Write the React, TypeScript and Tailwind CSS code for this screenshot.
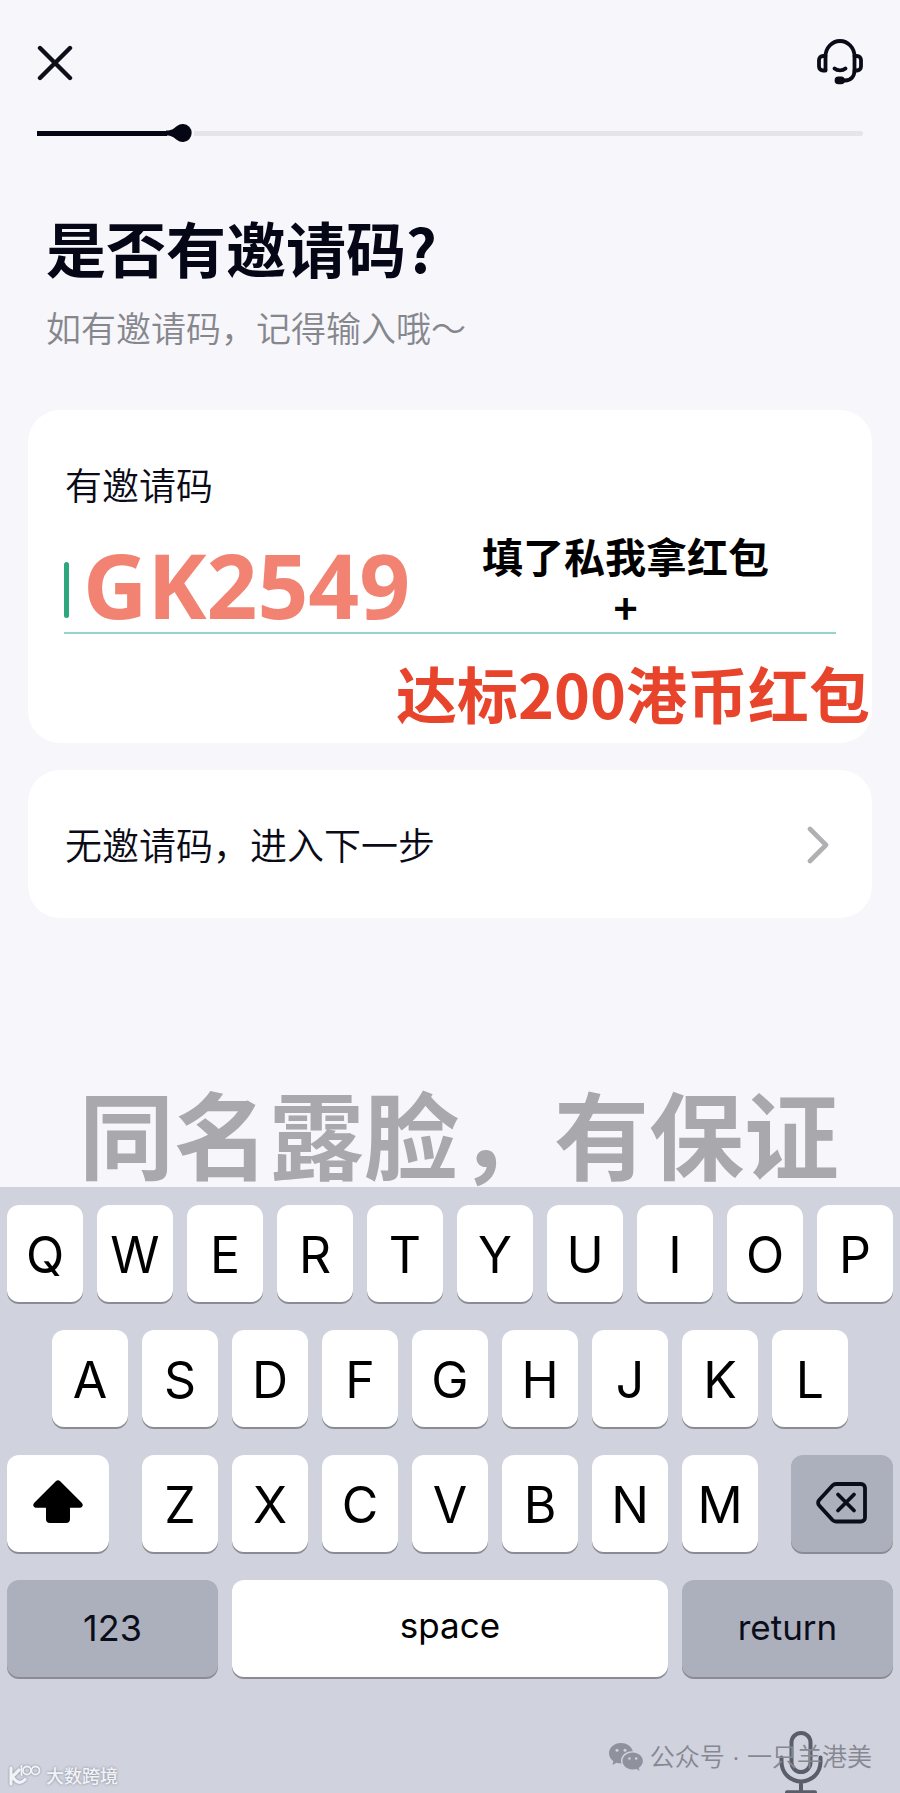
import type { ReactNode } from 'react';
import clsx from 'clsx';

interface KeyProps {
  label: string;
  tone?: 'light' | 'dark';
  className?: string;
  children?: ReactNode;
}

function Key({ label, tone = 'light', className = 'flex-[76] pt-1 text-[50px]', children }: KeyProps) {
  return (
    <button
      type="button"
      aria-label={label}
      className={clsx(
        'flex h-[97px] min-w-0 items-center justify-center rounded-xl shadow-[0_2px_0_#8b8c93]',
        tone === 'dark' ? 'bg-[#abb0bc] text-[#0a0d1a]' : 'bg-white text-black',
        className,
      )}
    >
      {children ?? label}
    </button>
  );
}

function Keyboard() {
  return (
    <section aria-label="Keyboard" className="relative flex flex-1 flex-col bg-[#d0d2de] px-[7px] pt-[18px] font-['Inter','Liberation_Sans',sans-serif]">
      <div className="flex flex-col gap-7">
        <div className="flex gap-3.5">
          {'QWERTYUIOP'.split('').map((letter) => (
            <Key key={letter} label={letter} />
          ))}
        </div>
        <div className="flex gap-3.5 px-[45px]">
          {'ASDFGHJKL'.split('').map((letter) => (
            <Key key={letter} label={letter} />
          ))}
        </div>
        <div className="flex gap-[33px]">
          <Key label="Shift" className="flex-[102]">
            <ShiftIcon />
          </Key>
          <div className="flex flex-[616] gap-3.5">
            {'ZXCVBNM'.split('').map((letter) => (
              <Key key={letter} label={letter} />
            ))}
          </div>
          <Key label="Delete" tone="dark" className="flex-[102]">
            <DeleteIcon />
          </Key>
        </div>
        <div className="flex gap-3.5">
          <Key label="123" tone="dark" className="flex-[211] pb-0.5 text-[36px]" />
          <Key label="space" className="flex-[436] pb-1.5 text-[35px]" />
          <Key label="return" tone="dark" className="flex-[211] pb-0.5 text-[35px]" />
        </div>
      </div>

      <button type="button" aria-label="Dictation" className="mt-auto mr-[70px] self-end">
        <MicIcon />
      </button>

      <p className="absolute right-7 bottom-4 flex items-center gap-[7px] font-['Liberation_Sans','Noto_Sans_CJK_SC',sans-serif] text-[25px] leading-10 font-[350] whitespace-pre text-[#858791]">
        <WechatIcon />
        公众号 · 一只羊港美
      </p>
      <p className="absolute bottom-1.5 left-2 flex items-center gap-1 font-['Noto_Sans_CJK_SC',sans-serif] text-[18px] leading-6 font-medium text-[#f2f3f9] text-shadow-[0_0_3px_#80828e]">
        <BrandIcon />
        大数跨境
      </p>
    </section>
  );
}

function CloseIcon() {
  return (
    <svg viewBox="0 0 36 36" className="size-9" fill="none" stroke="#0d0e18" strokeWidth="4.4" strokeLinecap="round">
      <path d="M3 3l30 30M33 3L3 33" />
    </svg>
  );
}

function HeadsetIcon() {
  return (
    <svg viewBox="0 0 48 48" className="size-12" fill="none" stroke="#0a0b16" strokeWidth="3.8" strokeLinecap="round" strokeLinejoin="round">
      <path d="M9.500 31V17.500a14.500 15.500 0 0 1 29 0V31c0 6.500-3.500 10.500-9.500 10.500h-4" />
      <path d="M9.500 17H7a4 4 0 0 0-4 4v6.500a4 4 0 0 0 4 4h2.500" />
      <path d="M38.500 17H41a4 4 0 0 1 4 4v6.500a4 4 0 0 1-4 4h-2.500" />
      <path d="M18.500 29.500c3 2.500 8 2.500 11 0" />
      <rect x="20.500" y="39.500" width="6.500" height="3.800" rx="1.900" fill="#0a0b16" />
    </svg>
  );
}

function ChevronIcon() {
  return (
    <svg viewBox="0 0 22 40" className="mt-0.5 h-10 w-[22px]" fill="none" stroke="#b0b0b2" strokeWidth="4.600" strokeLinecap="round" strokeLinejoin="round">
      <path d="M3 4l16 16L3 36" />
    </svg>
  );
}

function ShiftIcon() {
  return (
    <svg viewBox="0 0 50 44" className="mb-1 h-11 w-[50px]" fill="#000">
      <path d="M22.800 1.200a3.200 3.200 0 0 1 4.400 0l21.500 21.500c2 2 1 5-1.700 5H37V39a4 4 0 0 1-4 4H17a4 4 0 0 1-4-4V27.700H3c-2.700 0-3.700-3-1.700-5z" />
    </svg>
  );
}

function DeleteIcon() {
  return (
    <svg viewBox="0 0 52 44" className="mb-0.5 h-11 w-[52px]" fill="none" stroke="#0a0d1a" strokeWidth="3.800" strokeLinecap="round" strokeLinejoin="round">
      <path d="M20 3h25a4 4 0 0 1 4 4v29.500a4 4 0 0 1-4 4H20a5 5 0 0 1-3.500-1.500L3.200 24.500a4 4 0 0 1 0-5.500L16.500 4.500A5 5 0 0 1 20 3z" />
      <path d="M22 13.500l16 16M38 13.500l-16 16" />
    </svg>
  );
}

function MicIcon() {
  return (
    <svg viewBox="0 0 44 63" className="h-[63px] w-11" fill="none" stroke="#5a5e6a" strokeWidth="4" strokeLinecap="round">
      <rect x="12.500" y="3" width="19" height="39" rx="9.500" />
      <path d="M2.500 27.500V32a19.500 19.500 0 0 0 39 0v-4.500M22 51.500V62M8 62.200h28" />
    </svg>
  );
}

function WechatIcon() {
  return (
    <svg viewBox="0 0 34 28" className="h-7 w-[34px]" fill="#8f919d">
      <path d="M12 0C5.300 0 0 4.500 0 10.300c0 3.200 1.700 6 4.400 8L3.400 22l4.100-2.200c1.500.5 3 .7 4.900.7-2-7 4-12.700 11.400-12.300C22.500 3.300 17.700 0 12 0z" />
      <path d="M23.700 9.600c-5.700 0-10.200 3.800-10.200 8.500s4.500 8.500 10.200 8.500c1.300 0 2.500-.2 3.600-.5l3.300 1.700-.9-2.900c2.600-1.600 4.200-4 4.200-6.800 0-4.700-4.500-8.500-10.200-8.500z" />
      <g fill="#d0d2de">
        <circle cx="8" cy="7.200" r="1.500" />
        <circle cx="16" cy="7.200" r="1.500" />
        <circle cx="20.400" cy="15.500" r="1.300" />
        <circle cx="27.200" cy="15.500" r="1.300" />
      </g>
    </svg>
  );
}

function BrandIcon() {
  return (
    <svg viewBox="0 0 34 22" className="h-[22px] w-[34px] drop-shadow-[0_0_1px_#80828e]" fill="none" stroke="#f2f3f9" strokeLinecap="round">
      <path d="M3 4v16M11 6L4.500 12.500C8 19 13 20 17 15.500" strokeWidth="3.200" />
      <path d="M13.500 2v9" strokeWidth="2" />
      <circle cx="19" cy="6.500" r="4" strokeWidth="1.800" />
      <circle cx="27.500" cy="6.500" r="4" strokeWidth="1.800" />
    </svg>
  );
}

function StepProgress() {
  return (
    <div role="progressbar" aria-label="开户进度" aria-valuenow={19} className="mx-[37px] mt-9 flex h-5 items-center">
      <div className="flex w-[19%] items-center">
        <span className="h-[5px] flex-1 bg-[#040614]" />
        <svg viewBox="0 0 28 20" className="-ml-px h-5 w-7" fill="#040614">
          <path d="M0 7.500c6 0 7-1.500 11-4.500a9 9 0 1 1 0 14c-4-3-5-4.500-11-4.500z" />
        </svg>
      </div>
      <span className="h-[5px] flex-1 rounded-r-full bg-[#e5e4e9]" />
    </div>
  );
}

export default function App() {
  return (
    <main
      lang="zh-CN"
      className="flex min-h-screen flex-col overflow-hidden bg-[#f6f6fb] font-['Noto_Sans_CJK_SC',sans-serif] text-[#0a0b16]"
    >
      <header className="flex items-center justify-between pt-[39px] pr-9 pl-[37px]">
        <button type="button" aria-label="关闭">
          <CloseIcon />
        </button>
        <button type="button" aria-label="客服">
          <HeadsetIcon />
        </button>
      </header>
      <StepProgress />

      <div className="mt-16 px-[46px]">
        <h1 className="text-[60px] leading-20 font-bold text-[#050716]">是否有邀请码?</h1>
        <p className="mt-4 text-[35px] leading-12 font-[350] text-[#86878d]">如有邀请码，记得输入哦～</p>
      </div>

      <section className="mx-7 mt-[59px] rounded-[32px] bg-white px-9 pt-[46px] pb-3.5">
        <label htmlFor="invite-code" className="block pl-px text-[37px] leading-14 font-[350]">
          有邀请码
        </label>
        <div className="mt-[18px] flex items-end justify-between border-b-2 border-[#93d5c8]">
          <span className="mb-3.5 h-14 w-[5px] shrink-0 rounded-full bg-[#2ea680]" />
          <input
            id="invite-code"
            defaultValue="GK2549"
            className="ml-3.5 h-[94px] min-w-0 flex-1 bg-transparent font-['Noto_Sans',sans-serif] text-[89px] font-bold text-[#f28373] outline-none"
          />
          <p className="mr-[67px] shrink-0 text-center text-[41px] leading-[51px] font-bold text-black">
            填了私我拿红包
            <br />+
          </p>
        </div>
        <p className="mt-[22px] -mr-[34px] text-right text-[61px] leading-[73px] font-bold whitespace-nowrap text-[#e8432b]">达标200港币红包</p>
      </section>

      <button
        type="button"
        className="mx-7 mt-[27px] flex items-center justify-between rounded-[32px] bg-white py-[46px] pr-[43px] pl-[37px] text-left text-[37px] leading-14 font-[350]"
      >
        无邀请码，进入下一步
        <ChevronIcon />
      </button>

      <p className="mt-[165px] mb-1.5 pl-[18px] text-center text-[95px] leading-[98px] font-bold whitespace-nowrap text-[#a9a9ad]">同名露脸，有保证</p>
      <Keyboard />
    </main>
  );
}
